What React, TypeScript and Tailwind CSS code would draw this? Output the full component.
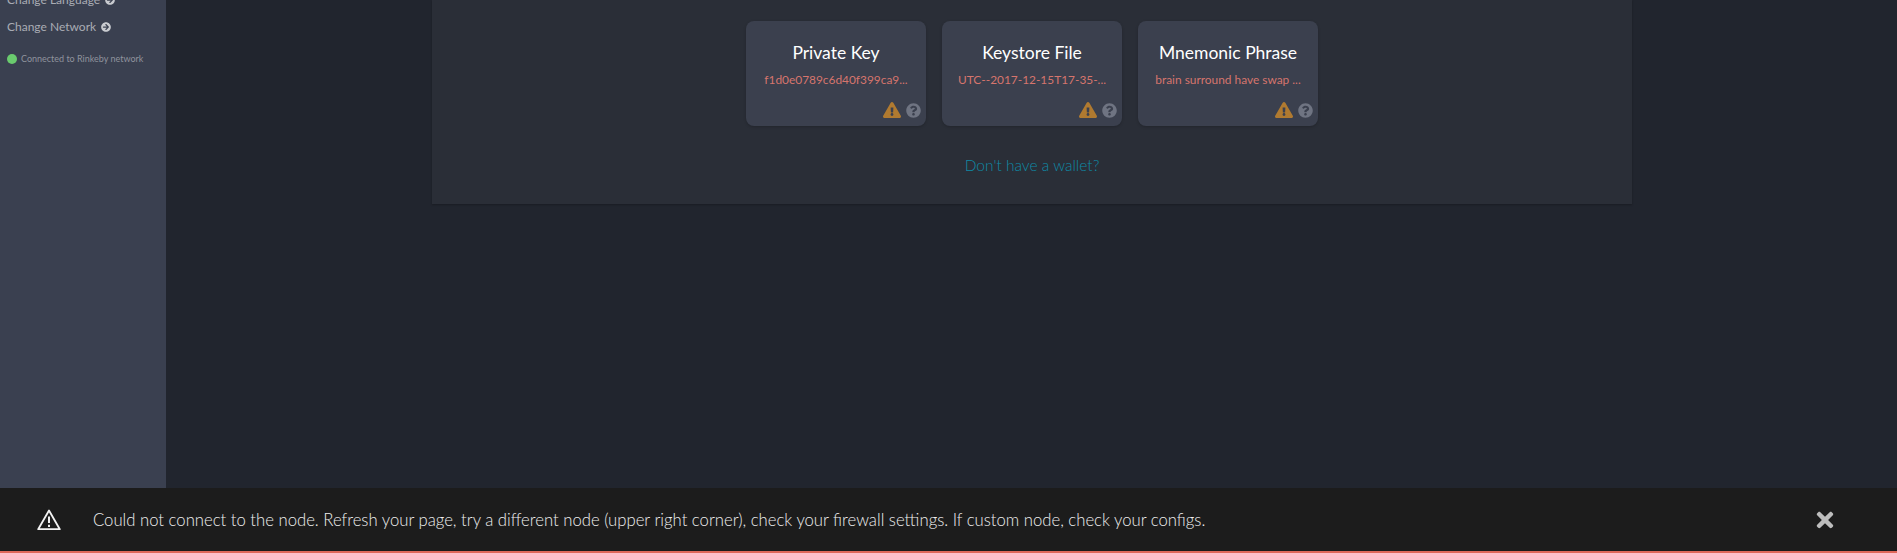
import { FaArrowCircleRight, FaExclamationTriangle, FaQuestionCircle, FaTimes } from "react-icons/fa";

const wallets = [
  { title: "Private Key", example: "f1d0e0789c6d40f399ca9..." },
  { title: "Keystore File", example: "UTC--2017-12-15T17-35-..." },
  { title: "Mnemonic Phrase", example: "brain surround have swap ..." },
];

function SideLink({ label }: { label: string }) {
  return (
    <div className="flex items-center gap-[5px] h-[19px] text-[12px] text-[#a9acb4]">
      <span>{label}</span>
      <FaArrowCircleRight className="w-[10px] h-[10px] text-[#c9cbd0]" />
    </div>
  );
}

function WalletCard({ title, example }: { title: string; example: string }) {
  return (
    <div className="relative w-[180px] h-[105px] rounded-[8px] bg-[#3b404e] shadow-[0_1px_3px_rgba(0,0,0,0.2)] px-[8px] pt-[20px] text-center">
      <div className="text-[17.5px] leading-[24px] text-white">{title}</div>
      <div className="mt-[7px] whitespace-nowrap text-[11.9px] leading-[16px] text-[#d6756d]">{example}</div>
      <div className="absolute right-[5px] bottom-[8px] flex items-center gap-[5px]">
        <FaExclamationTriangle className="w-[18px] h-[16px] text-[#b07a30]" />
        <FaQuestionCircle className="w-[15px] h-[15px] text-[#6f7482]" />
      </div>
    </div>
  );
}

export default function App() {
  return (
    <div className="flex flex-col h-[553px] overflow-hidden bg-[#21252e] font-['Lato','Liberation_Sans',sans-serif]">
      <div className="flex flex-1 min-h-0">
        <aside className="w-[166px] shrink-0 bg-[#3a4050] px-[7px] -mt-[10px]">
          <SideLink label="Change Language" />
          <div className="mt-[8px]">
            <SideLink label="Change Network" />
          </div>
          <div className="mt-[17px] flex items-center gap-[4px] text-[9px] leading-[12px] text-[#8f939d]">
            <span className="w-[10px] h-[10px] rounded-full bg-[#6acb6e]" />
            <span>Connected to Rinkeby network</span>
          </div>
        </aside>
        <main className="flex-1 min-w-0">
          <div className="ml-[266px] w-[1200px] h-[204px] bg-[#2a2e37] shadow-[0_1px_2px_rgba(0,0,0,0.25)] pt-[21px]">
            <div className="flex justify-center gap-[16px]">
              {wallets.map((w) => (
                <WalletCard key={w.title} title={w.title} example={w.example} />
              ))}
            </div>
            <div className="mt-[27px] text-center text-[15.5px] leading-[24px] font-light text-[#0e8aa6]">
              Don&apos;t have a wallet?
            </div>
          </div>
        </main>
      </div>
      <div className="flex items-center h-[65px] shrink-0 bg-[#1c1c1c] border-b-2 border-[#e0685a] pl-[37px] pr-[60px]">
        <svg viewBox="0 0 24 22" className="w-[24px] h-[22px] text-[#f2f2f2]" fill="none" stroke="currentColor">
          <path d="M12 1.5 L22.8 20.2 H1.2 Z" strokeWidth="1.8" strokeLinejoin="round" />
          <path d="M12 7.5 V14" strokeWidth="2" />
          <path d="M12 15.8 V18" strokeWidth="2" />
        </svg>
        <div className="ml-[32px] flex-1 pt-[2px] text-[16.7px] font-light text-[#eeeeee]">
          Could not connect to the node. Refresh your page, try a different node (upper right corner), check your firewall settings. If custom node, check your configs.
        </div>
        <FaTimes className="w-[24px] h-[24px] text-[#bdbdbd]" />
      </div>
    </div>
  );
}
